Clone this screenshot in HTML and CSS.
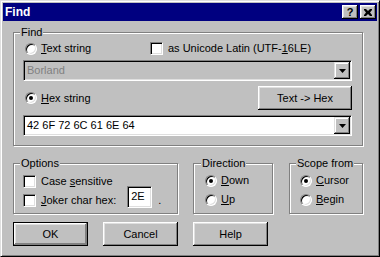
FILE: index.html
```html
<!DOCTYPE html>
<html>
<head>
<meta charset="utf-8">
<title>Find</title>
<link rel="stylesheet" href="styles.css">
</head>
<body>
<div class="window">
  <div class="titlebar">
    <span class="title">Find</span>
    <div class="tbtns">
      <span class="tbtn qm">?</span>
      <span class="tbtn"><svg width="8" height="7" viewBox="0 0 8 7"><path d="M0 0h2l2 2 2-2h2v1L6 3.5 8 6v1H6L4 5 2 7H0V6l2-2.5L0 1z" fill="#000"/></svg></span>
    </div>
  </div>
  <div class="content">
    <fieldset class="group find">
      <legend>Find</legend>
      <div class="row r1">
        <label class="opt first"><span class="radio"></span><span><u>T</u>ext string</span></label>
        <label class="opt chk"><span class="check"></span><span>as Unicode Latin (UTF-<u>1</u>6LE)</span></label>
      </div>
      <div class="combo disabled">
        <span class="val">Borland</span>
        <span class="drop"><svg width="7" height="4" viewBox="0 0 7 4"><path d="M0 0h7L3.5 4z" fill="#000"/></svg></span>
      </div>
      <div class="row r2">
        <label class="opt"><span class="radio on"></span><span><u>H</u>ex string</span></label>
        <span class="btn tohex">Text -&gt; Hex</span>
      </div>
      <div class="combo edit">
        <span class="val">42 6F 72 6C 61 6E 64</span>
        <span class="drop"><svg width="7" height="4" viewBox="0 0 7 4"><path d="M0 0h7L3.5 4z" fill="#000"/></svg></span>
      </div>
    </fieldset>
    <div class="lower">
      <fieldset class="group options">
        <legend>Options</legend>
        <div class="row small"><label class="opt chk"><span class="check"></span><span>Case <u>s</u>ensitive</span></label></div>
        <div class="row small joker">
          <label class="opt chk"><span class="check"></span><span><u>J</u>oker char hex:</span></label>
          <span class="field">2E</span>
          <span class="dot">.</span>
        </div>
      </fieldset>
      <fieldset class="group direction">
        <legend>Direction</legend>
        <div class="row small"><label class="opt"><span class="radio on"></span><span><u>D</u>own</span></label></div>
        <div class="row small"><label class="opt"><span class="radio"></span><span><u>U</u>p</span></label></div>
      </fieldset>
      <fieldset class="group scope">
        <legend>Scope from</legend>
        <div class="row small"><label class="opt"><span class="radio on"></span><span><u>C</u>ursor</span></label></div>
        <div class="row small"><label class="opt"><span class="radio"></span><span><u>B</u>egin</span></label></div>
      </fieldset>
    </div>
    <div class="buttons">
      <span class="btn dlg default">OK</span>
      <span class="btn dlg">Cancel</span>
      <span class="btn dlg">Help</span>
    </div>
  </div>
</div>
</body>
</html>
```

FILE: styles.css
```css
* { box-sizing: border-box; }
html, body { margin: 0; padding: 0; background: #c0c0c0; }
body {
  font-family: "Liberation Sans", Arial, sans-serif;
  font-size: 11px;
  color: #000;
}
u { text-decoration: underline; text-underline-offset: 1px; }

.window {
  width: 380px;
  height: 257px;
  background: #c0c0c0;
  border: 1px solid;
  border-color: #dfdfdf #000 #000 #dfdfdf;
  box-shadow: inset 1px 1px #fff, inset -1px -1px #808080;
  padding: 2px;
}

.titlebar {
  height: 18px;
  background: #000080;
  display: flex;
  align-items: center;
  justify-content: space-between;
  padding: 0 1px 0 2px;
}
.title {
  color: #fff;
  font-weight: bold;
  font-size: 12px;
  line-height: 18px;
}
.tbtns { display: flex; gap: 2px; }
.tbtn {
  width: 16px;
  height: 14px;
  background: #c0c0c0;
  box-shadow: inset -1px -1px #000, inset 1px 1px #fff, inset -2px -2px #808080, inset 2px 2px #dfdfdf;
  display: flex;
  align-items: center;
  justify-content: center;
}
.tbtn.qm {
  font-weight: bold;
  font-size: 11px;
  line-height: 14px;
  padding-bottom: 1px;
}

.content { padding: 0 0 0 10px; }

.group {
  margin: 0;
  border: 1px solid #808080;
  box-shadow: inset 1px 1px #fff, 1px 1px #fff;
  min-width: 0;
}
.group legend {
  padding: 0 1px;
  line-height: 13px;
  height: 13px;
  background: #c0c0c0;
}

.find {
  width: 350px;
  margin-top: 5px;
  padding: 3px 10px 9px 9px;
}
.find legend { margin-left: -3px; }

.row { display: flex; align-items: center; height: 13px; }
.opt { display: flex; align-items: center; gap: 4px; line-height: 13px; white-space: nowrap; }
.opt.chk { gap: 5px; }
.r1 .first { width: 127px; }
.r1 .opt:not(.chk), .r2 .opt { padding-left: 2px; }

.radio {
  flex: none;
  position: relative;
  width: 12px;
  height: 12px;
  border-radius: 50%;
  background: #fff;
  border: 1px solid;
  border-color: #808080 #fff #fff #808080;
  box-shadow: inset 1px 1px #000, inset -1px -1px #dfdfdf;
}
.radio.on::after {
  content: "";
  position: absolute;
  left: 3px;
  top: 3px;
  width: 4px;
  height: 4px;
  border-radius: 50%;
  background: #000;
}
.check {
  flex: none;
  width: 13px;
  height: 13px;
  background: #fff;
  border: 1px solid;
  border-color: #808080 #fff #fff #808080;
  box-shadow: inset 1px 1px #000, inset -1px -1px #dfdfdf;
}

.combo {
  margin-top: 5px;
  height: 21px;
  display: flex;
  align-items: stretch;
  border: 1px solid;
  border-color: #808080 #fff #fff #808080;
  box-shadow: inset 1px 1px #000, inset -1px -1px #dfdfdf;
  padding: 1px;
}
.combo.edit { background: #fff; }
.combo .val { flex: 1; padding-left: 2px; line-height: 17px; }
.combo.disabled .val { color: #808080; }
.drop {
  width: 16px;
  background: #c0c0c0;
  box-shadow: inset -1px -1px #000, inset 1px 1px #dfdfdf, inset -2px -2px #808080, inset 2px 2px #fff;
  display: flex;
  align-items: center;
  justify-content: center;
}
.drop svg { display: block; margin-top: 1px; }

.btn {
  background: #c0c0c0;
  box-shadow: inset -1px -1px #000, inset 1px 1px #fff, inset -2px -2px #808080, inset 2px 2px #dfdfdf;
  display: flex;
  align-items: center;
  justify-content: center;
  line-height: 13px;
}
.r2 { height: 24px; margin-top: 5px; justify-content: space-between; }
.tohex { width: 94px; height: 24px; }

.lower { display: flex; margin-top: 11px; }
.lower .group { height: 57px; padding: 4px 0 0 9px; }
.lower .group legend { margin-left: -3px; }
.lower .row.small + .row.small { margin-top: 6px; }
.options { width: 165px; }
.direction { width: 80px; margin-left: 15px; padding-left: 11px !important; }
.direction legend { margin-left: -4px !important; }
.scope { width: 74px; margin-left: 16px; padding-left: 10px !important; }
.scope legend { margin-left: -4px !important; }
.options .row:first-of-type { margin-top: 1px; }
.options .row.small + .row.small { margin-top: 6px; }

.joker { align-items: center; }
.field {
  width: 25px;
  height: 22px;
  margin-left: 11px;
  align-self: flex-end;
  margin-bottom: -1px;
  background: #fff;
  border: 1px solid;
  border-color: #808080 #fff #fff #808080;
  box-shadow: inset 1px 1px #000, inset -1px -1px #dfdfdf;
  padding: 0 0 0 3px;
  line-height: 19px;
}
.dot { margin-left: 6px; line-height: 13px; align-self: flex-end; }

.buttons { display: flex; gap: 15px; margin-top: 8px; }
.dlg { width: 75px; height: 24px; }
.dlg.default {
  border: 1px solid #000;
  box-shadow: inset -1px -1px #808080, inset 1px 1px #fff, inset -2px -2px #808080, inset 2px 2px #dfdfdf;
}
```
